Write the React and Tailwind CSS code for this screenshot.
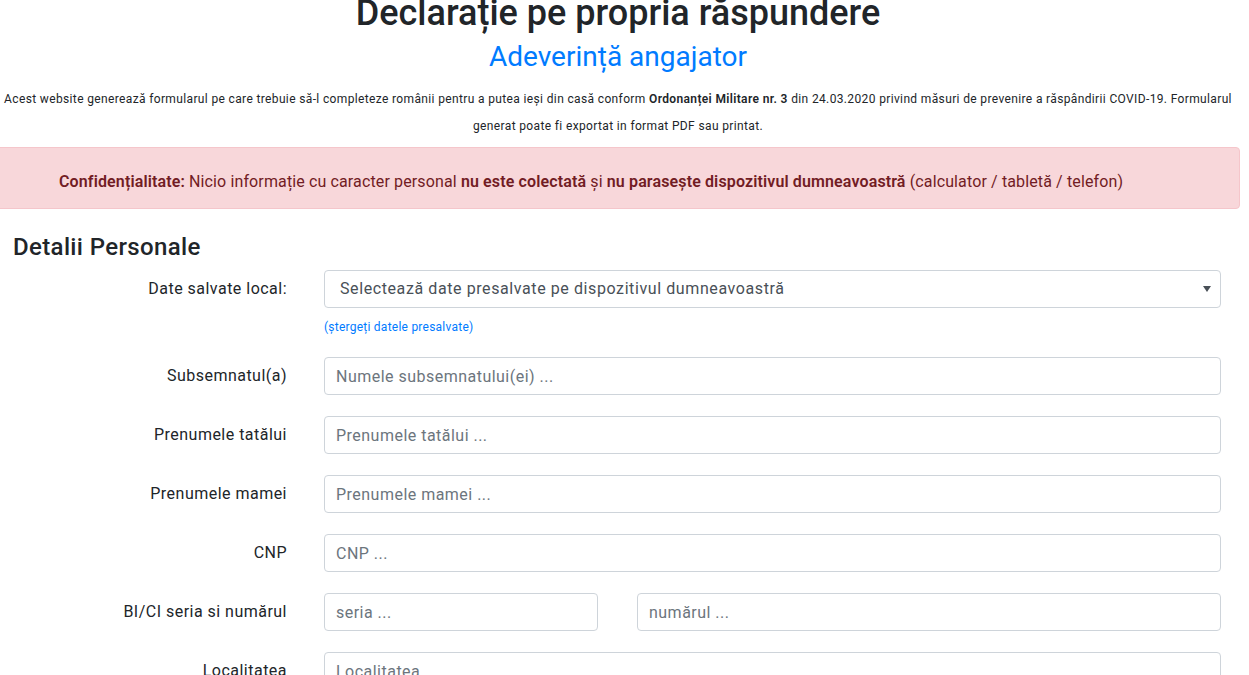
const font = { fontFamily: '"Segoe UI", Roboto, "Noto Sans", sans-serif' };

function Row({ label, children }) {
  return (
    <div className="flex items-center mt-[21px]">
      <label className="w-[291px] shrink-0 text-right text-[16px] text-[#212529]">{label}</label>
      <div className="ml-[37px] mr-[19px] flex flex-1 gap-[39px]">{children}</div>
    </div>
  );
}

function Field({ placeholder, className = "flex-1" }) {
  return (
    <input
      type="text"
      placeholder={placeholder}
      className={`${className} h-[38px] rounded-[4px] border border-[#ced4da] bg-white px-[11px] text-[16px] text-[#495057] placeholder:text-[#6c757d] outline-none`}
    />
  );
}

export default function App() {
  return (
    <div className="w-[1244px] -ml-[4px] -mt-[11px] bg-white text-[#212529] tracking-[0.03em]" style={font}>
      <h1 className="text-center text-[36px] leading-[48px] font-medium tracking-normal">Declarație pe propria răspundere</h1>
      <h3 className="mt-[3px] text-center text-[28px] leading-[34px] tracking-normal text-[#007bff]">Adeverință angajator</h3>
      <p className="mt-[12px] text-center text-[12px] leading-[27px] tracking-[0.03em] whitespace-nowrap">
        Acest website generează formularul pe care trebuie să-l completeze românii pentru a putea ieși din casă conform{" "}
        <b className="font-semibold">Ordonanței Militare nr. 3</b> din 24.03.2020 privind măsuri de prevenire a răspândirii COVID-19. Formularul
        <br />
        generat poate fi exportat in format PDF sau printat.
      </p>
      <div className="mt-[7px] h-[62px] flex items-center pl-[62px] pt-[8px] rounded-[4px] border border-[#f5c6cb] bg-[#f8d7da] text-[16px] tracking-[0.008em] text-[#721c24]">
        <span>
          <b className="font-semibold">Confidențialitate:</b> Nicio informație cu caracter personal <b className="font-semibold">nu este colectată</b> și{" "}
          <b className="font-semibold">nu parasește dispozitivul dumneavoastră</b> (calculator / tabletă / telefon)
        </span>
      </div>

      <h4 className="mt-[24px] ml-[17px] text-[24px] leading-[29px] font-medium tracking-[0.015em]">Detalii Personale</h4>

      <div className="flex items-center mt-[8px]">
        <label className="w-[291px] shrink-0 text-right text-[16px]">Date salvate local:</label>
        <div className="ml-[37px] mr-[19px] flex-1 h-[38px] flex items-center justify-between rounded-[4px] border border-[#ced4da] pl-[15px] pr-[9px] text-[16px] tracking-[0.037em] text-[#495057]">
          <span>Selectează date presalvate pe dispozitivul dumneavoastră</span>
          <svg width="8" height="6" viewBox="0 0 8 6"><path d="M0 0h8L4 6z" fill="#495057" /></svg>
        </div>
      </div>
      <div className="ml-[328px] mt-[10px] text-[12px] leading-[18px] tracking-[0.02em] text-[#007bff]">(ștergeți datele presalvate)</div>

      <div className="mt-[6px]">
        <Row label="Subsemnatul(a)"><Field placeholder="Numele subsemnatului(ei) ..." /></Row>
        <Row label="Prenumele tatălui"><Field placeholder="Prenumele tatălui ..." /></Row>
        <Row label="Prenumele mamei"><Field placeholder="Prenumele mamei ..." /></Row>
        <Row label="CNP"><Field placeholder="CNP ..." /></Row>
        <Row label="BI/CI seria si numărul">
          <Field placeholder="seria ..." className="w-[274px]" />
          <Field placeholder="numărul ..." />
        </Row>
        <Row label="Localitatea"><Field placeholder="Localitatea ..." /></Row>
        <Row label="Adresa"><Field placeholder="Adresa ..." /></Row>
      </div>
    </div>
  );
}
